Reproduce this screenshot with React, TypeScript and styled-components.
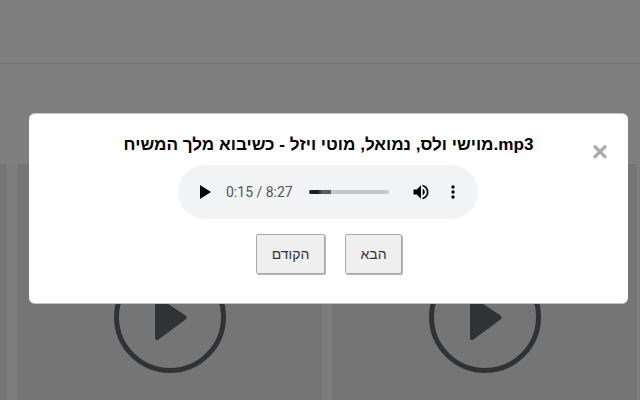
import styled, { createGlobalStyle } from 'styled-components';

const GlobalStyle = createGlobalStyle`
    html, body {
        margin: 0;
        padding: 0;
        height: 100%;
        background: #fff;
        overflow: hidden;
    }
    * {
        box-sizing: border-box;
    }
`;

const Page = styled.div`
    width: 640px;
    height: 400px;
    overflow: hidden;
`;

const Header = styled.header`
    height: 64px;
    border-bottom: 1px solid #e2e2e2;
`;

const CardRow = styled.div`
    display: flex;
    gap: 10px;
    margin-top: 100px;
    background: #fafafa;
`;

const Card = styled.div<{ $sliver?: boolean }>`
    flex: 0 0 ${props => (props.$sliver ? '7px' : '305px')};
    height: 236px;
    padding-top: 97px;
    display: flex;
    justify-content: center;
    background: #eaebec;
`;

const Overlay = styled.div`
    position: fixed;
    inset: 0;
    padding: 113px 0 0 29px;
    background: rgba(0, 0, 0, 0.5);
`;

const Modal = styled.div`
    position: relative;
    width: 599px;
    height: 191px;
    padding-top: 19px;
    display: flex;
    flex-direction: column;
    align-items: center;
    background: #fff;
    border-top: 1px solid #c4c4c4;
    border-bottom: 1px solid #c4c4c4;
    border-radius: 6px;
`;

const Title = styled.h2`
    margin: 0;
    height: 24px;
    font: bold 17.12px/24px "Liberation Sans", Arial, sans-serif;
    color: #000;
    white-space: nowrap;
`;

const CloseButton = styled.span`
    position: absolute;
    top: 24px;
    right: 20px;
    font: bold 28px/28px "Liberation Sans", Arial, sans-serif;
    color: #aaa;
`;

const Player = styled.div`
    width: 300px;
    height: 54px;
    margin: 8px 1px 0 0;
    padding-left: 14px;
    display: flex;
    align-items: center;
    background: #f1f3f4;
    border-radius: 27px;
`;

const PlayIcon = styled.svg`
    flex: none;
    width: 24px;
    height: 24px;
    fill: #000;
`;

const SmallIcon = styled.svg<{ $gap?: number }>`
    flex: none;
    width: 20px;
    height: 20px;
    margin-left: ${props => props.$gap ?? 0}px;
    fill: #000;
`;

const TimeText = styled.span`
    margin-left: 10px;
    width: 67px;
    font: 14px/20px Roboto, Arial, sans-serif;
    color: #555;
    white-space: nowrap;
`;

const Track = styled.div`
    width: 80px;
    height: 4px;
    margin: 0 22px 0 16px;
    background: #c4c6c8;
    border-radius: 2px;
    overflow: hidden;
`;

const TrackFill = styled.div`
    height: 100%;
    background: linear-gradient(to right, #1f1f1f 40%, #5b5d5f 60%);
`;

const ButtonRow = styled.div`
    margin: 15px 0 0 1px;
    display: flex;
    gap: 20px;
`;

const NavButton = styled.button<{ $width: number }>`
    width: ${props => props.$width}px;
    height: 40px;
    padding: 0;
    font: 14px/20px "Liberation Sans", Arial, sans-serif;
    color: #333;
    background: #efefef;
    border: 1px solid #a9a9a9;
    border-radius: 2px;
    box-shadow: 1px 1px 0 #b5b5b5;
`;

function BigPlay() {
    return (
        <svg width="112" height="112" viewBox="0 0 112 112">
            <circle cx="56" cy="56" r="53.5" fill="none" stroke="#5f666c" strokeWidth="5" />
            <path
                d="M43 35.5 Q41 34 41 37 V76 Q41 80.5 44.5 78.5 L71.5 58.5 Q74 56.5 71.5 54.5 Z"
                fill="#5f666c"
            />
        </svg>
    );
}

function App() {
    return (
        <Page>
            <GlobalStyle />
            <Header />
            <CardRow>
                <Card $sliver />
                <Card><BigPlay /></Card>
                <Card><BigPlay /></Card>
            </CardRow>
            <Overlay>
                <Modal>
                    <CloseButton>×</CloseButton>
                    <Title>מוישי ולס, נמואל, מוטי ויזל - כשיבוא מלך המשיח.mp3</Title>
                    <Player>
                        <PlayIcon viewBox="0 0 24 24"><path d="M8 5v14l11-7z" /></PlayIcon>
                        <TimeText>0:15 / 8:27</TimeText>
                        <Track><TrackFill style={{ width: `${(22 / 80) * 100}%` }} /></Track>
                        <SmallIcon viewBox="0 0 24 24">
                            <path d="M3 9v6h4l5 5V4L7 9H3zm13.5 3c0-1.77-1.02-3.29-2.5-4.03v8.05c1.48-.73 2.5-2.25 2.5-4.02zM14 3.23v2.06c2.89.86 5 3.54 5 6.71s-2.11 5.85-5 6.71v2.06c4.01-.91 7-4.49 7-8.77s-2.99-7.86-7-8.77z" />
                        </SmallIcon>
                        <SmallIcon viewBox="0 0 24 24" $gap={12}>
                            <path d="M12 8c1.1 0 2-.9 2-2s-.9-2-2-2-2 .9-2 2 .9 2 2 2zm0 2c-1.1 0-2 .9-2 2s.9 2 2 2 2-.9 2-2-.9-2-2-2zm0 6c-1.1 0-2 .9-2 2s.9 2 2 2 2-.9 2-2-.9-2-2-2z" />
                        </SmallIcon>
                    </Player>
                    <ButtonRow>
                        <NavButton $width={69}>הקודם</NavButton>
                        <NavButton $width={57}>הבא</NavButton>
                    </ButtonRow>
                </Modal>
            </Overlay>
        </Page>
    );
}

export default App;
